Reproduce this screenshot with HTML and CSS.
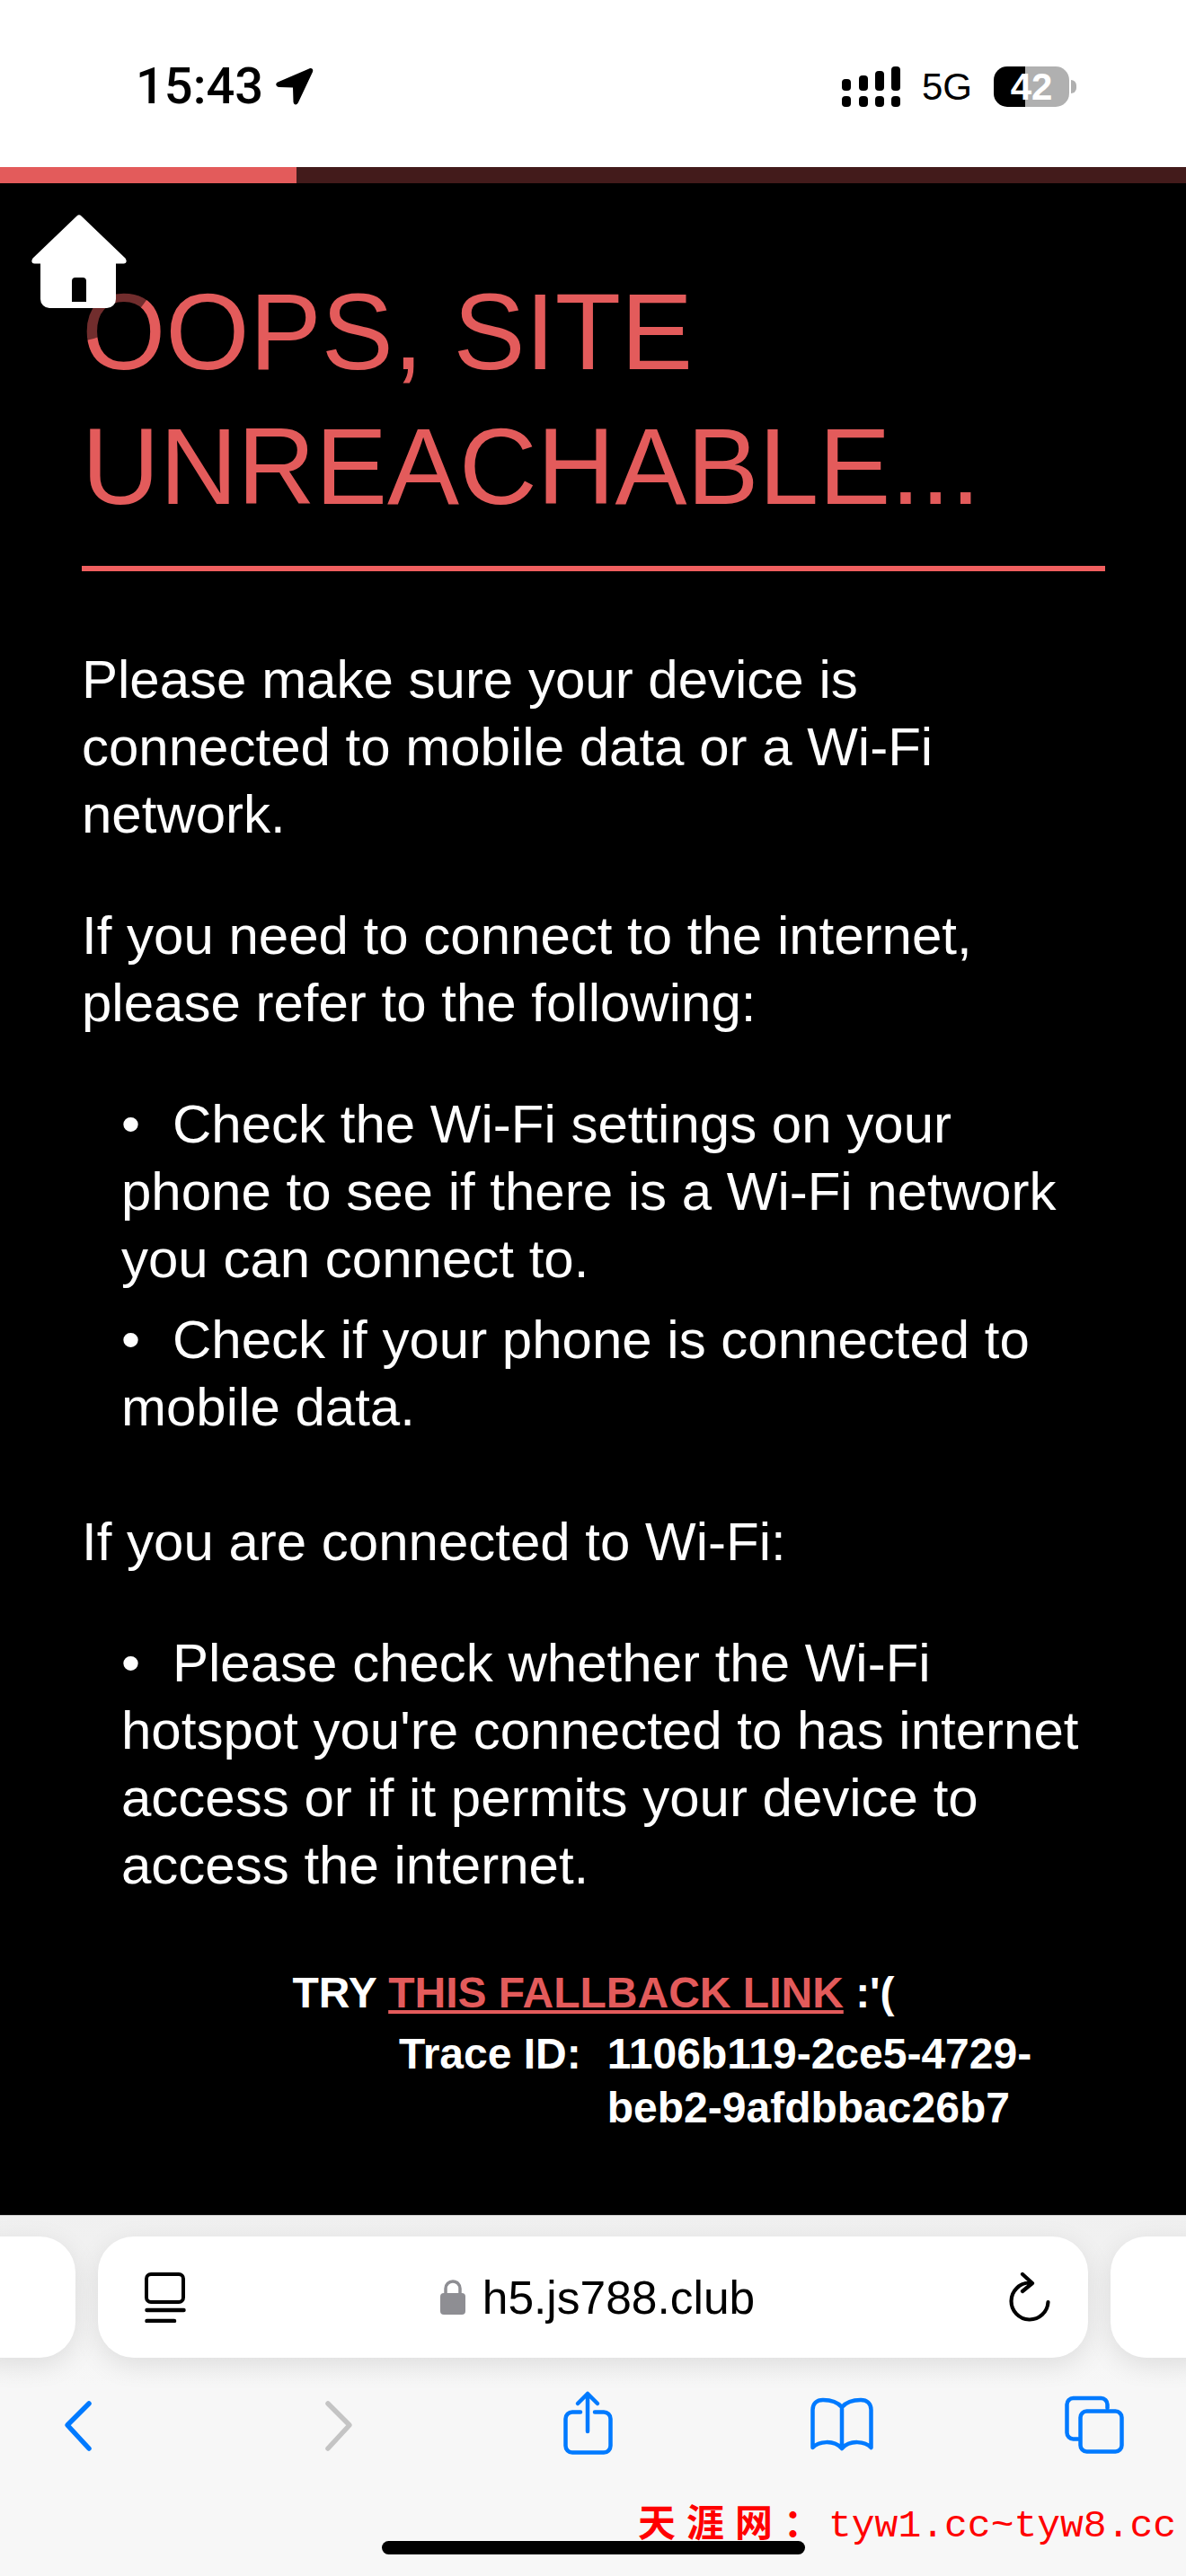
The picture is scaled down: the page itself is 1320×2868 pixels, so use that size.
FILE: index.html
```html
<!DOCTYPE html>
<html lang="en">
<head>
<meta charset="UTF-8">
<meta name="viewport" content="width=device-width, initial-scale=1.0">
<title>Oops, site unreachable</title>
<link rel="stylesheet" href="styles.css">
</head>
<body>
<div class="page">
    <div class="status-bar">
        <div class="status-left">
            <span class="clock">15:43</span>
            <svg class="arrow" width="42" height="42" viewBox="0 0 42 42"><path d="M37 1.5c3-1.5 5 .5 4 3.5L25 39c-1.5 3.5-5 3-5.5-.5L19 22.5 4 22C0 22 -1 18 2 16.5z"/></svg>
        </div>
        <div class="status-right">
            <svg class="signal" width="65" height="45" viewBox="0 0 65 45">
                <rect x="0" y="14" width="10" height="13" rx="4"/>
                <rect x="19" y="10" width="10" height="17" rx="4"/>
                <rect x="37" y="5" width="10" height="22" rx="4"/>
                <rect x="55" y="0" width="10" height="27" rx="4"/>
                <rect x="0" y="33" width="10" height="12" rx="4"/>
                <rect x="19" y="33" width="10" height="12" rx="4"/>
                <rect x="37" y="33" width="10" height="12" rx="4"/>
                <rect x="55" y="33" width="10" height="12" rx="4"/>
            </svg>
            <span class="network">5G</span>
            <div class="battery">42</div>
        </div>
    </div>

    <div class="progress"><div class="progress-fill"></div></div>

    <div class="content">
        <h1>OOPS, SITE UNREACHABLE...</h1>
        <p>Please make sure your device is connected to mobile data or a Wi-Fi network.</p>
        <p>If you need to connect to the internet, please refer to the following:</p>
        <ul>
            <li>Check the Wi-Fi settings on your phone to see if there is a Wi-Fi network you can connect to.</li>
            <li>Check if your phone is connected to mobile data.</li>
        </ul>
        <p>If you are connected to Wi-Fi:</p>
        <ul>
            <li>Please check whether the Wi-Fi hotspot you're connected to has internet access or if it permits your device to access the internet.</li>
        </ul>
        <div class="fallback">TRY <a href="#">THIS FALLBACK LINK</a> :'(</div>
        <div class="trace">
            <span>Trace ID:</span>
            <span>1106b119-2ce5-4729-beb2-9afdbbac26b7</span>
        </div>
        <div class="home-dim"></div>
        <svg class="home-icon" width="106" height="104" viewBox="0 0 106 104">
            <path fill="#fff" d="M50.500 1.500a3.500 3.500 0 0 1 5 0l49 47c2 3 1.500 6-2 6H94v39.500a10 10 0 0 1-10 10H20a10 10 0 0 1-10-10V54.500H3.500c-3.500 0-4-3-2-6z"/>
            <path fill="#000" d="M45 97V74a4 4 0 0 1 4-4h8a4 4 0 0 1 4 4v23z"/>
        </svg>
    </div>

    <div class="toolbar">
        <div class="tab-row">
            <div class="side-tab"></div>
            <div class="url-bar">
                <svg class="page-icon" width="46" height="56" viewBox="0 0 46 56">
                    <rect x="2" y="2" width="41" height="31" rx="5" fill="none" stroke="#000" stroke-width="4"/>
                    <path d="M2.5 42H43.5M2.5 54H33" fill="none" stroke="#000" stroke-width="4.5" stroke-linecap="round"/>
                </svg>
                <div class="address">
                    <svg width="28" height="39" viewBox="0 0 28 39"><path d="M6 17V10a8 8 0 0 1 16 0v7" fill="none" stroke="#8e8e93" stroke-width="3.5"/><rect x="0" y="15" width="28" height="24" rx="4" fill="#8e8e93"/></svg>
                    <span>h5.js788.club</span>
                </div>
                <svg class="reload" width="46" height="56" viewBox="0 0 46 56"><path d="M23 11.500A20.500 20.500 0 1 0 43.500 33M15 2l11 10-11 9" fill="none" stroke="#000" stroke-width="4.200" stroke-linecap="round" stroke-linejoin="round"/></svg>
            </div>
            <div class="side-tab"></div>
        </div>
        <div class="nav-row">
            <svg viewBox="0 0 96 100" width="96" height="100"><path class="blue" d="M61 26 37 50 61 76"/></svg>
            <svg viewBox="0 0 96 100" width="96" height="100"><path class="grey" d="M45 26 69 50 45 76"/></svg>
            <svg viewBox="0 0 96 100" width="96" height="100"><path class="blue thin" d="M44 35.500H35a7.500 7.500 0 0 0-7.500 7.500V73a7.500 7.500 0 0 0 7.500 7.500H70a7.500 7.500 0 0 0 7.500-7.500V43a7.500 7.500 0 0 0-7.500-7.500H60M52 15V57M41 26 52 15 63 26"/></svg>
            <svg viewBox="0 0 96 100" width="96" height="100"><path class="blue thin" d="M53 30C47 23 38 22 32 22 25 22 20.500 26 20.500 33V75C27 68 44 66 53 76 62 66 79 68 85.500 75V33C85.500 26 81 22 74 22 68 22 59 23 53 30V76"/></svg>
            <svg viewBox="0 0 96 100" width="96" height="100"><rect class="blue thin" x="36.500" y="34.500" width="46" height="45" rx="7"/><path class="blue thin" d="M66.500 31V27a7 7 0 0 0-7-7H28.500a7 7 0 0 0-7 7V58.500a7 7 0 0 0 7 7H34"/></svg>
        </div>
        <div class="home-indicator"></div>
        <div class="watermark"><span class="wm-name">天涯网：</span><span class="wm-url">tyw1.cc~tyw8.cc</span></div>
    </div>
</div>
</body>
</html>
```

FILE: styles.css
```css
body {
    margin: 0;
    padding: 0;
    font-family: "Liberation Sans", Arial, sans-serif;
    background-color: #000;
}
.page {
    width: 1320px;
    height: 2868px;
    display: flex;
    flex-direction: column;
    overflow: hidden;
}

/* status bar */
.status-bar {
    height: 186px;
    box-sizing: border-box;
    padding: 6px 130px 0 151px;
    background-color: #fff;
    display: flex;
    justify-content: space-between;
    align-items: center;
    color: #000;
}
.status-left,
.status-right {
    display: flex;
    align-items: center;
}
.clock {
    font-family: Roboto, sans-serif;
    font-weight: 500;
    font-size: 56px;
    line-height: 56px;
}
.arrow {
    margin-left: 14px;
}
.network {
    font-size: 42px;
    line-height: 45px;
    margin: 0 24px;
}
.battery {
    position: relative;
    width: 84px;
    height: 45px;
    border-radius: 15px;
    background: linear-gradient(90deg, #000 35px, #b0b0b0 35px);
    color: #fff;
    font-weight: bold;
    font-size: 42px;
    line-height: 45px;
    text-align: center;
}
.battery::after {
    content: '';
    position: absolute;
    left: 86px;
    top: 15px;
    width: 6px;
    height: 15px;
    border-radius: 0 6px 6px 0;
    background-color: #b0b0b0;
}

/* progress */
.progress {
    height: 18px;
    background-color: #431b1b;
}
.progress-fill {
    width: 330px;
    height: 18px;
    background-color: #e35b5b;
}

/* error message */
.content {
    position: relative;
    flex: 1;
    overflow: hidden;
    box-sizing: border-box;
    padding: 90px 90px 0 91px;
    background-color: #000;
    color: #fff;
    font-size: 60px;
    line-height: 75px;
}
h1 {
    margin: 0 0 83px;
    padding-bottom: 36px;
    border-bottom: 6px solid #e35b5b;
    border-image: linear-gradient(#8a3a3a 50%, #f05f5f 50%) 1;
    color: #e35b5b;
    font-size: 120px;
    line-height: 150px;
    font-weight: normal;
}
p {
    margin: 0 0 60px;
}
ul {
    margin: 0 0 75px;
    padding: 0 0 0 44px;
    list-style: none;
}
li {
    margin-bottom: 15px;
}
li:last-child {
    margin-bottom: 0;
}
li::before {
    content: '•';
    display: inline-block;
    width: 57px;
}
.fallback {
    text-align: center;
    font-weight: bold;
    font-size: 48px;
    line-height: 60px;
}
.fallback a {
    color: #e35b5b;
}
.trace {
    display: grid;
    grid-template-columns: auto 1fr;
    column-gap: 29px;
    margin: 8px 0 0 353px;
    font-weight: bold;
    font-size: 48px;
    line-height: 60px;
}

/* home button sits over the heading */
.home-dim {
    position: absolute;
    left: -31px;
    top: -35px;
    width: 212px;
    height: 212px;
    border-radius: 50%;
    background-color: rgba(0, 0, 0, 0.5);
}
.home-icon {
    position: absolute;
    left: 35px;
    top: 35px;
}

/* safari toolbar */
.toolbar {
    height: 402px;
    box-sizing: border-box;
    position: relative;
    border-top: 1px solid #ccc;
    background: linear-gradient(#f0f0f0, #f7f7f7 190px);
}
.tab-row {
    display: flex;
    gap: 25px;
    margin: 23px -40px 0;
}
.side-tab {
    width: 124px;
    height: 135px;
    border-radius: 40px;
    background-color: #fff;
    box-shadow: 0 8px 30px rgba(0, 0, 0, 0.1);
}
.url-bar {
    flex: 1;
    height: 135px;
    box-sizing: border-box;
    padding: 0 42px 0 52px;
    border-radius: 40px;
    background-color: #fff;
    box-shadow: 0 8px 30px rgba(0, 0, 0, 0.1);
    display: flex;
    justify-content: space-between;
    align-items: center;
}
.address {
    display: flex;
    align-items: center;
    gap: 19px;
    font-size: 51.5px;
    color: #000;
}
.nav-row {
    display: grid;
    grid-template-columns: repeat(5, 282px);
    justify-items: center;
    margin: 25px 0 0 -55px;
}
.blue,
.grey {
    fill: none;
    stroke-width: 5.5;
    stroke-linecap: round;
    stroke-linejoin: round;
}
.blue {
    stroke: #007aff;
}
.grey {
    stroke: #c4c4c4;
}
.thin {
    stroke-width: 4.5;
}
.home-indicator {
    width: 471px;
    height: 15px;
    border-radius: 8px;
    margin: 79px 0 0 425px;
    background-color: #000;
}
.watermark {
    position: absolute;
    left: 710px;
    top: 308px;
    display: flex;
    align-items: baseline;
    color: #f00;
    white-space: nowrap;
}
.wm-name {
    font-family: "Noto Sans CJK SC", sans-serif;
    font-weight: 700;
    font-size: 42px;
    letter-spacing: 12px;
}
.wm-url {
    font-family: "Liberation Mono", monospace;
    font-size: 43px;
    margin-left: -4px;
}
```
